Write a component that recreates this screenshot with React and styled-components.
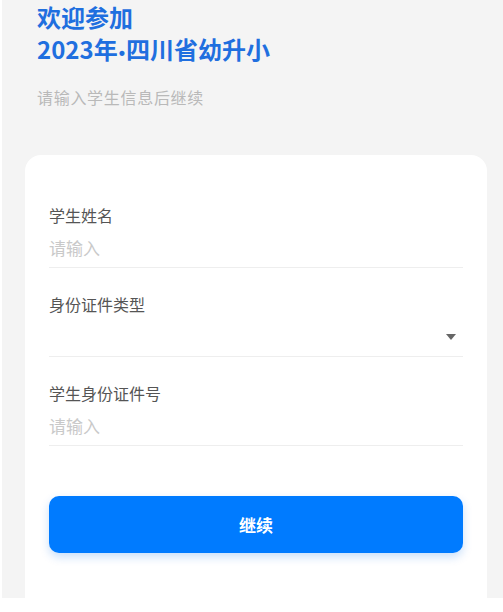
import React from 'react';
import styled, { createGlobalStyle } from 'styled-components';

const GlobalStyle = createGlobalStyle`
  html, body {
    margin: 0;
    padding: 0;
    background: #ffffff;
  }
  body {
    font-family: "Noto Sans CJK SC", "Noto Sans", "Liberation Sans", sans-serif;
  }
  * {
    box-sizing: border-box;
  }
`;

const Page = styled.div`
  margin-left: 2px;
  height: 598px;
  overflow: hidden;
  background: #f4f4f4;
  padding: 1px 16px 0 23px;
`;

const Header = styled.header`
  padding-left: 12px;
`;

const Title = styled.h1`
  margin: 0;
  font-size: 24px;
  line-height: 32px;
  font-weight: 700;
  color: #1f6fdf;
`;

const Dot = styled.span`
  font-family: "Liberation Sans", sans-serif;
  font-size: 18px;
  line-height: 0;
  margin: 0 1px;
`;

const Subtitle = styled.p`
  margin: 20px 0 0;
  font-size: 16px;
  line-height: 24px;
  letter-spacing: 0.7px;
  color: #b9b9b9;
`;

const Card = styled.div`
  margin-top: 46px;
  background: #ffffff;
  border-radius: 16px;
  padding: 24px 24px 60px;
`;

const Field = styled.div`
  padding: 24px 0 7px;
  border-bottom: 1px solid #eeeeee;
`;

const Label = styled.div`
  font-size: 16px;
  line-height: 24px;
  color: #555555;
`;

const InputRow = styled.div`
  margin-top: 9px;
  height: 24px;
  display: flex;
  align-items: center;
  justify-content: space-between;
`;

const Input = styled.input`
  flex: 1;
  border: none;
  outline: none;
  padding: 0;
  background: transparent;
  font-family: inherit;
  font-size: 17px;
  line-height: 24px;
  color: #333333;

  &::placeholder {
    color: #c9c9c9;
  }
`;

const Caret = styled.span`
  width: 0;
  height: 0;
  margin-right: 7px;
  border-left: 5px solid transparent;
  border-right: 5px solid transparent;
  border-top: 6px solid #666666;
`;

const Button = styled.button`
  display: block;
  width: 100%;
  height: 57px;
  margin-top: 50px;
  border: none;
  border-radius: 10px;
  background: #007bff;
  color: #ffffff;
  font-family: inherit;
  font-size: 17px;
  font-weight: 700;
  box-shadow: 0 4px 10px rgba(0, 110, 230, 0.22);
  cursor: pointer;
`;

export default function App() {
  return (
    <>
      <GlobalStyle />
      <Page>
        <Header>
          <Title>
            欢迎参加
            <br />
            2023年<Dot>•</Dot>四川省幼升小
          </Title>
          <Subtitle>请输入学生信息后继续</Subtitle>
        </Header>
        <Card>
          <Field>
            <Label>学生姓名</Label>
            <InputRow>
              <Input placeholder="请输入" />
            </InputRow>
          </Field>
          <Field>
            <Label>身份证件类型</Label>
            <InputRow>
              <Input readOnly />
              <Caret />
            </InputRow>
          </Field>
          <Field>
            <Label>学生身份证件号</Label>
            <InputRow>
              <Input placeholder="请输入" />
            </InputRow>
          </Field>
          <Button>继续</Button>
        </Card>
      </Page>
    </>
  );
}
